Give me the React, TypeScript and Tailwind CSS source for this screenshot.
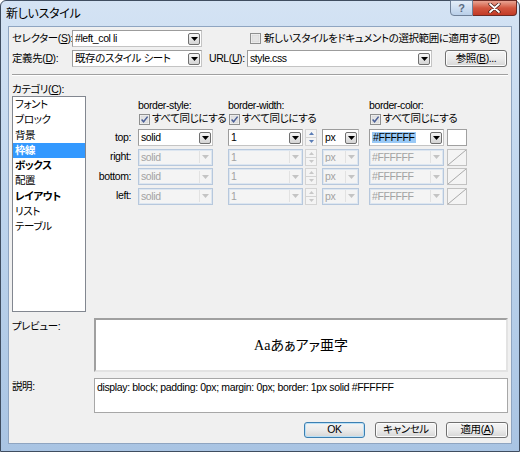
import React from "react";

const FONT =
  "font-['Liberation_Sans','Noto_Sans_CJK_JP',sans-serif] [font-feature-settings:'palt']";

function Arrow({ disabled }: { disabled?: boolean }) {
  return (
    <svg width="7" height="4" viewBox="0 0 7 4">
      <path d="M0 0 H7 L3.5 4 Z" fill={disabled ? "#c4c4c4" : "#000"} />
    </svg>
  );
}

function Combo({
  className,
  value,
  disabled,
  selected,
}: {
  className: string;
  value: string;
  disabled?: boolean;
  selected?: boolean;
}) {
  return (
    <div
      className={`h-full flex items-center border ${
        disabled
          ? "border-[#b7c8dd] bg-[#f4f4f4] text-[#a3a3a3] shadow-[inset_0_0_0_1px_#dde6f0]"
          : "border-[#9c9c9c] border-b-[#c4c4c4] border-r-[#c4c4c4] bg-white text-black"
      } ${className}`}
    >
      <div className="flex-1 min-w-0 pl-[2px] overflow-hidden leading-none">
        {selected ? (
          <span className="bg-[#99c9f6] px-[1px]">{value}</span>
        ) : (
          value
        )}
      </div>
      {disabled ? (
        <div className="w-[12px] h-[12px] mr-[1px] flex items-center justify-center border-l border-[#e2e2e2]">
          <Arrow disabled />
        </div>
      ) : (
        <div className="w-[12px] h-[12px] mr-[1px] flex items-center justify-center border border-[#707070] rounded-[2px] bg-gradient-to-b from-[#f6f6f6] to-[#d4d4d4]">
          <Arrow />
        </div>
      )}
    </div>
  );
}

function Spin({ disabled }: { disabled?: boolean }) {
  const c = disabled ? "#c8c8c8" : "#5a7db6";
  return (
    <div className="w-[12px] h-full flex flex-col border border-[#d4d4d4] bg-[#f4f4f4]">
      <div className="flex-1 flex items-center justify-center border-b border-[#d4d4d4]">
        <svg width="5" height="3" viewBox="0 0 5 3">
          <path d="M0 3 H5 L2.5 0 Z" fill={c} />
        </svg>
      </div>
      <div className="flex-1 flex items-center justify-center">
        <svg width="5" height="3" viewBox="0 0 5 3">
          <path d="M0 0 H5 L2.5 3 Z" fill={c} />
        </svg>
      </div>
    </div>
  );
}

function Swatch({ disabled }: { disabled?: boolean }) {
  return disabled ? (
    <div className="w-[20px] h-full border border-[#c2c2c2] bg-[#f4f4f4]">
      <svg width="18" height="15" viewBox="0 0 18 15" className="block">
        <path d="M0 15 L18 0" stroke="#a9a9a9" strokeWidth="1" />
      </svg>
    </div>
  ) : (
    <div className="w-[20px] h-full border border-[#a0a0a0] bg-white" />
  );
}

function Check({ checked }: { checked?: boolean }) {
  return (
    <svg width="11" height="11" viewBox="0 0 11 11" className="shrink-0">
      <rect x="0.5" y="0.5" width="10" height="10" fill="#f6f6f6" stroke="#8e8f8f" />
      <rect x="2" y="2" width="7" height="7" fill="#e4e4e4" stroke="#cfcfcf" strokeWidth="0.6" />
      {checked && (
        <path d="M2.6 5.4 L4.6 7.8 L8.6 2.6" stroke="#4a5f97" strokeWidth="1.5" fill="none" />
      )}
    </svg>
  );
}

function Btn({
  children,
  className,
  primary,
}: {
  children: React.ReactNode;
  className: string;
  primary?: boolean;
}) {
  return (
    <div
      className={`h-full flex items-center justify-center rounded-[3px] border bg-gradient-to-b from-[#f4f4f4] via-[#ebebeb] to-[#d6d6d6] ${
        primary
          ? "border-[#3c7fb1] shadow-[inset_0_0_0_1px_#b9e0f7]"
          : "border-[#707070] shadow-[inset_0_0_0_1px_#fcfcfc]"
      } ${className}`}
    >
      {children}
    </div>
  );
}

const rows = [
  { label: "top:", disabled: false },
  { label: "right:", disabled: true },
  { label: "bottom:", disabled: true },
  { label: "left:", disabled: true },
];

const categories = [
  { t: "フォント" },
  { t: "ブロック" },
  { t: "背景" },
  { t: "枠線", sel: true },
  { t: "ボックス", bold: true },
  { t: "配置" },
  { t: "レイアウト", bold: true },
  { t: "リスト" },
  { t: "テーブル" },
];

export default function App() {
  return (
    <div
      className={`w-[520px] h-[452px] flex flex-col whitespace-nowrap border border-[#3f4d60] rounded-t-[6px] bg-gradient-to-b from-[#d4e3f4] via-[#bcd3ec] to-[#a9c4e3] text-[10.5px] tracking-[-0.4px] text-black ${FONT}`}
    >
      {/* Title bar */}
      <div className="h-[25px] relative shrink-0">
        <div className="absolute left-[5px] top-[4px] text-[12px] tracking-[-0.3px]">
          新しいスタイル
        </div>
        <div className="absolute right-[2px] -top-px flex">
          <div className="w-[23px] h-[16px] flex items-center justify-center rounded-bl-[4px] border border-[#6f8199] bg-gradient-to-b from-[#e4eef9] to-[#b9cfe9] text-[11px] text-[#5b6b80] font-bold">
            ?
          </div>
          <div className="w-[44px] h-[16px] flex items-center justify-center rounded-br-[4px] border border-l-0 border-[#6b2a24] bg-gradient-to-b from-[#e8a493] via-[#d2563f] to-[#c23a26]">
            <svg width="13" height="10" viewBox="0 0 13 10">
              <path
                d="M2 1 L11 9 M11 1 L2 9"
                stroke="#3d1510"
                strokeWidth="3.2"
                strokeLinecap="round"
              />
              <path
                d="M2 1 L11 9 M11 1 L2 9"
                stroke="#fff"
                strokeWidth="1.8"
                strokeLinecap="round"
              />
            </svg>
          </div>
        </div>
      </div>

      {/* Client area */}
      <div className="flex-1 mx-[7px] mb-[7px] bg-[#f0f0f0] border border-[#8fa5c1] flex flex-col px-[3px]">
        {/* Row 1 */}
        <div className="mt-[3px] h-[17px] flex items-center">
          <div className="w-[60px]">
            セレクター(<u>S</u>):
          </div>
          <Combo className="w-[130px]" value="#left_col li" />
          <div className="ml-[48px] flex items-center gap-[3px]">
            <Check />
            <span>
              新しいスタイルをドキュメントの選択範囲に適用する(<u>P</u>)
            </span>
          </div>
        </div>

        {/* Row 2 */}
        <div className="mt-[3px] h-[17px] flex items-center">
          <div className="w-[60px]">
            定義先(<u>D</u>):
          </div>
          <Combo className="w-[130px]" value="既存のスタイル シート" />
          <div className="w-[38px] ml-[7px]">
            URL(<u>U</u>):
          </div>
          <Combo className="w-[185px]" value="style.css" />
          <Btn className="ml-[13px] w-[62px]">
            参照(<u>B</u>)...
          </Btn>
        </div>

        {/* Separator */}
        <div className="mt-[7px] border-t border-[#a0a0a0] border-b border-b-white" />

        <div className="mt-[7px] h-[13px] leading-[13px]">
          カテゴリ(<u>C</u>):
        </div>

        {/* Main */}
        <div className="h-[216px] flex">
          <div className="w-[74px] border border-[#828790] bg-white">
            {categories.map((c) => (
              <div
                key={c.t}
                className={`h-[15.3px] leading-[15.3px] pl-[2px] ${
                  c.sel ? "bg-[#3399ff] text-white font-bold" : ""
                } ${c.bold ? "font-bold" : ""}`}
              >
                {c.t}
              </div>
            ))}
          </div>

          <div className="flex-1 flex flex-col pt-[3px]">
            <div className="h-[13px] flex items-center">
              <div className="w-[52px]" />
              <div className="w-[90px]">border-style:</div>
              <div className="w-[141px]">border-width:</div>
              <div>border-color:</div>
            </div>
            <div className="h-[14px] flex items-center">
              <div className="w-[53px]" />
              <div className="w-[90px] flex items-center gap-[2px]">
                <Check checked />
                <span>すべて同じにする</span>
              </div>
              <div className="w-[141px] flex items-center gap-[2px]">
                <Check checked />
                <span>すべて同じにする</span>
              </div>
              <div className="flex items-center gap-[2px]">
                <Check checked />
                <span>すべて同じにする</span>
              </div>
            </div>

            <div className="mt-[3px] flex flex-col gap-[2.6px]">
              {rows.map((r) => (
                <div key={r.label} className="h-[17px] flex items-center">
                  <div className="w-[47px] text-right pr-[2px]">{r.label}</div>
                  <Combo
                    className="ml-[5px] w-[75px]"
                    value="solid"
                    disabled={r.disabled}
                  />
                  <Combo
                    className="ml-[15px] w-[75px]"
                    value="1"
                    disabled={r.disabled}
                  />
                  <div className="ml-[2px] h-full">
                    <Spin disabled={r.disabled} />
                  </div>
                  <Combo
                    className="ml-[5px] w-[37px]"
                    value="px"
                    disabled={r.disabled}
                  />
                  <Combo
                    className="ml-[10px] w-[75px]"
                    value="#FFFFFF"
                    disabled={r.disabled}
                    selected={!r.disabled}
                  />
                  <div className="ml-[3px] h-full">
                    <Swatch disabled={r.disabled} />
                  </div>
                </div>
              ))}
            </div>
          </div>
        </div>

        {/* Preview */}
        <div className="mt-[6px] h-[54px] flex">
          <div className="w-[82px] pt-[1px]">プレビュー:</div>
          <div className="flex-1 flex items-center justify-center bg-white border-2 border-t-[#a0a0a0] border-l-[#a0a0a0] border-r-[#e3e3e3] border-b-[#e3e3e3] text-[14px] tracking-normal">
            <span className="font-['Liberation_Serif',serif]">Aa</span>
            <span>あぁアァ亜字</span>
          </div>
        </div>

        {/* Description */}
        <div className="mt-[6px] h-[35px] flex">
          <div className="w-[82px] pt-[1px]">説明:</div>
          <div className="flex-1 bg-white border border-[#a7a7a7] px-[2px] pt-[1px] text-[10.5px] tracking-[-0.35px]">
            display: block; padding: 0px; margin: 0px; border: 1px solid
            #FFFFFF
          </div>
        </div>

        {/* Buttons */}
        <div className="mt-[9px] h-[16px] flex justify-end">
          <Btn className="w-[61px]" primary>
            OK
          </Btn>
          <Btn className="ml-[10px] w-[62px]">キャンセル</Btn>
          <Btn className="ml-[9px] w-[62px]">
            適用(<u>A</u>)
          </Btn>
        </div>
      </div>
    </div>
  );
}
